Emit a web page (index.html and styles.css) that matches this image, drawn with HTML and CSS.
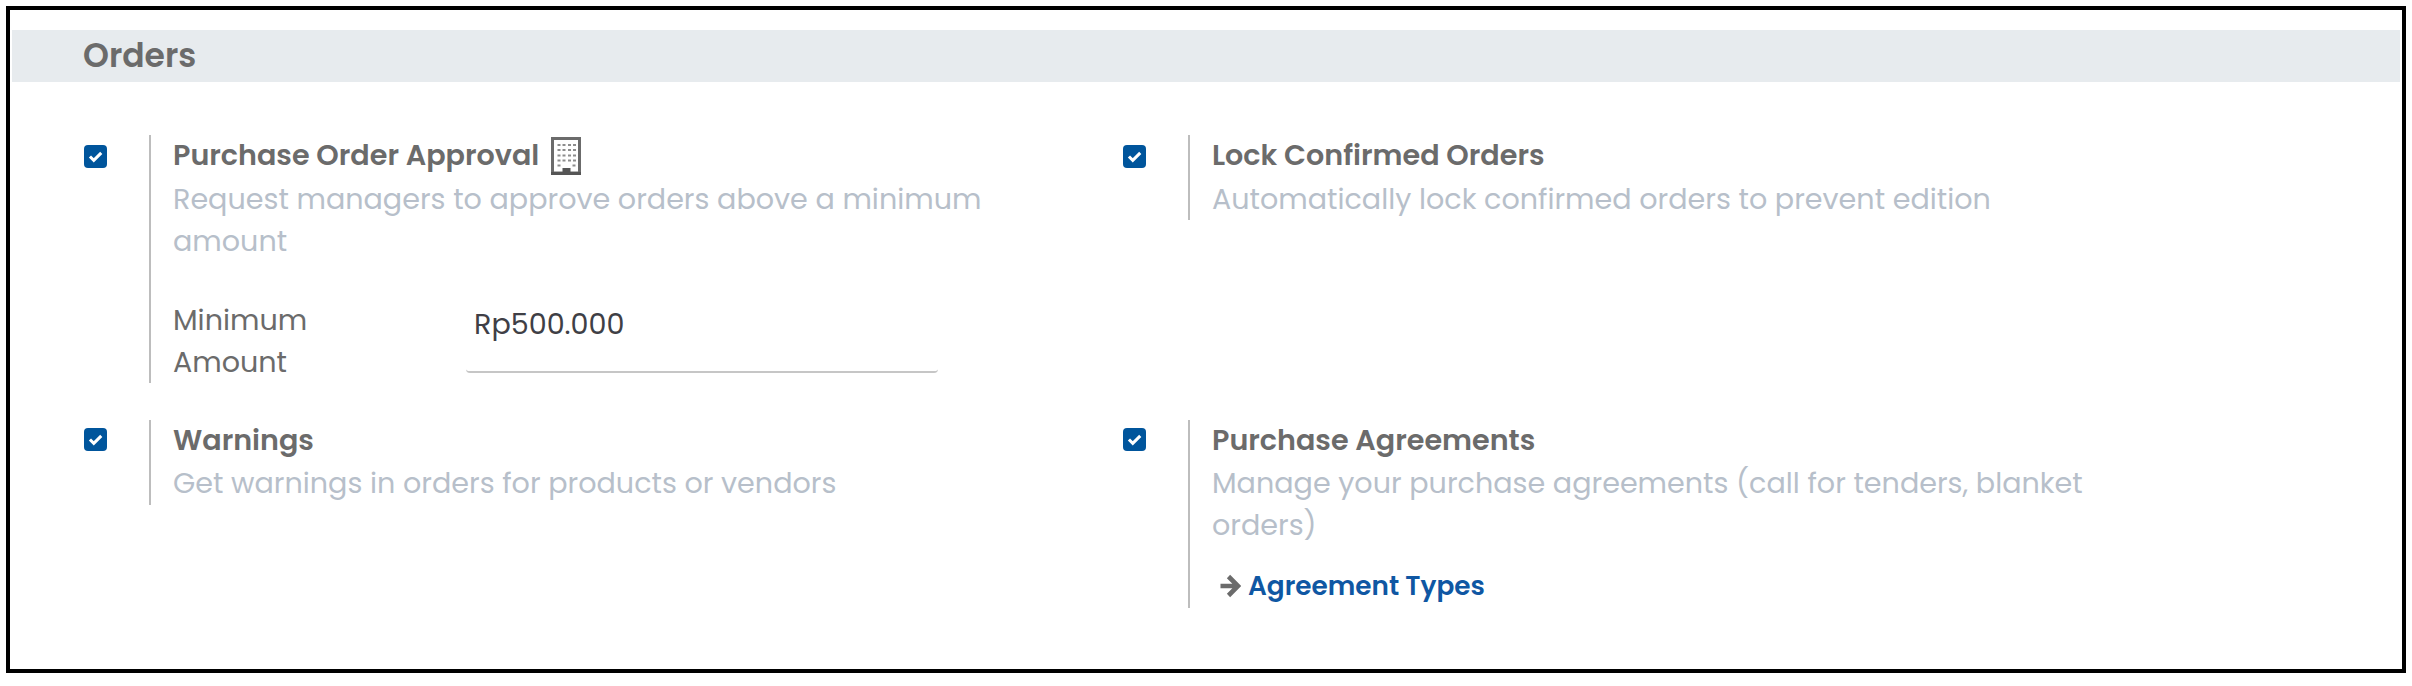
FILE: index.html
```html
<!DOCTYPE html>
<html lang="en">
<head>
<meta charset="utf-8">
<title>Purchase settings</title>
<link rel="stylesheet" href="styles.css">
</head>
<body>
<main class="frame">
  <h2 class="section">Orders</h2>
  <div class="grid">
    <section class="setting">
      <span class="check"><svg viewBox="0 0 24 24"><path d="M6.200 12l4 4 7.800-7.800"/></svg></span>
      <div class="body">
        <div class="name">Purchase Order Approval<svg class="building" viewBox="0 0 30 38"><path class="wall" d="M1.500 1.500h27v34.500h-27z"/><path class="windows" d="M6.500 8h8M17 8h8M6.500 13h8M17 13h8M6.500 18.500h8M17 18.500h8M6.500 23.500h8M17 23.500h8M6.500 28.500h4M21.500 28.500h4"/><path class="door" d="M11.500 31h8v5h-8zM0 35h30v3H0z"/></svg></div>
        <div class="desc">Request managers to approve orders above a minimum<br>amount</div>
        <div class="field">
          <div class="label">Minimum<br>Amount</div>
          <div class="input">Rp500.000</div>
        </div>
      </div>
    </section>
    <section class="setting">
      <span class="check"><svg viewBox="0 0 24 24"><path d="M6.200 12l4 4 7.800-7.800"/></svg></span>
      <div class="body">
        <div class="name">Lock Confirmed Orders</div>
        <div class="desc">Automatically lock confirmed orders to prevent edition</div>
      </div>
    </section>
    <section class="setting lower">
      <span class="check"><svg viewBox="0 0 24 24"><path d="M6.200 12l4 4 7.800-7.800"/></svg></span>
      <div class="body">
        <div class="name">Warnings</div>
        <div class="desc">Get warnings in orders for products or vendors</div>
      </div>
    </section>
    <section class="setting lower">
      <span class="check"><svg viewBox="0 0 24 24"><path d="M6.200 12l4 4 7.800-7.800"/></svg></span>
      <div class="body">
        <div class="name">Purchase Agreements</div>
        <div class="desc">Manage your purchase agreements (call for tenders, blanket<br>orders)</div>
        <div class="link"><svg class="arrow" viewBox="0 0 22 24"><path d="M1.500 12h16M9.500 2.500l9.500 9.500-9.500 9.500"/></svg><a>Agreement Types</a></div>
      </div>
    </section>
  </div>
</main>
</body>
</html>
```
FILE: styles.css
```css
* { box-sizing: border-box; }
body {
  margin: 0;
  padding: 6px;
  background: #fff;
  font-family: Poppins, Inter, sans-serif;
  font-size: 28.6px;
  line-height: 42.7px;
  color: #6b6b6b;
}
.frame {
  width: 2400px;
  height: 667px;
  border: 4px solid #000;
  padding: 20px 2px 0;
}
.section {
  margin: 0;
  height: 52px;
  padding-left: 71px;
  background: #e7ebee;
  font-size: 33px;
  line-height: 52.5px;
  font-weight: 600;
}
.grid {
  display: grid;
  grid-template-columns: 1039px 1fr;
  grid-template-rows: 249px auto;
  row-gap: 36px;
  align-items: start;
  padding: 53px 0 0 72px;
}
.setting { display: flex; align-items: flex-start; }
.check {
  width: 23px;
  height: 23px;
  margin: 10px 42px 0 0;
  border-radius: 4px;
  background: #00559c;
}
.lower .check { margin-top: 8px; }
.check svg { display: block; width: 23px; height: 23px; }
.check path { fill: none; stroke: #fff; stroke-width: 3.200; }
.body { border-left: 2px solid #bdbdbd; padding-left: 22px; white-space: nowrap; }
.name { display: flex; height: 42.7px; line-height: 41px; font-weight: 600; }
.lower .name { height: 41.7px; }
.lower .desc { padding-bottom: 1px; }
.desc { color: #b7bfca; }
.building { width: 30px; height: 38px; margin: 2px 0 0 12px; }
.wall { fill: none; stroke: #6b6b6b; stroke-width: 3; }
.windows { stroke: #8d8d8d; stroke-width: 2; stroke-dasharray: 3 2; }
.door { fill: #555; }
.field { display: flex; margin-top: 35px; }
.label { width: 293px; padding-top: 1px; line-height: 42px; }
.input {
  width: 472px;
  height: 75px;
  padding: 5px 0 0 8px;
  border-bottom: 2px solid #c6c6c6;
  border-radius: 4px;
  color: #3f3f46;
}
.link { display: flex; align-items: center; padding: 17px 0 0 7px; font-size: 26.3px; font-weight: 600; color: #0f57a3; }
.arrow { width: 22px; height: 24px; margin-right: 7px; }
.arrow path { fill: none; stroke: #6b6b6b; stroke-width: 4.600; }
```
